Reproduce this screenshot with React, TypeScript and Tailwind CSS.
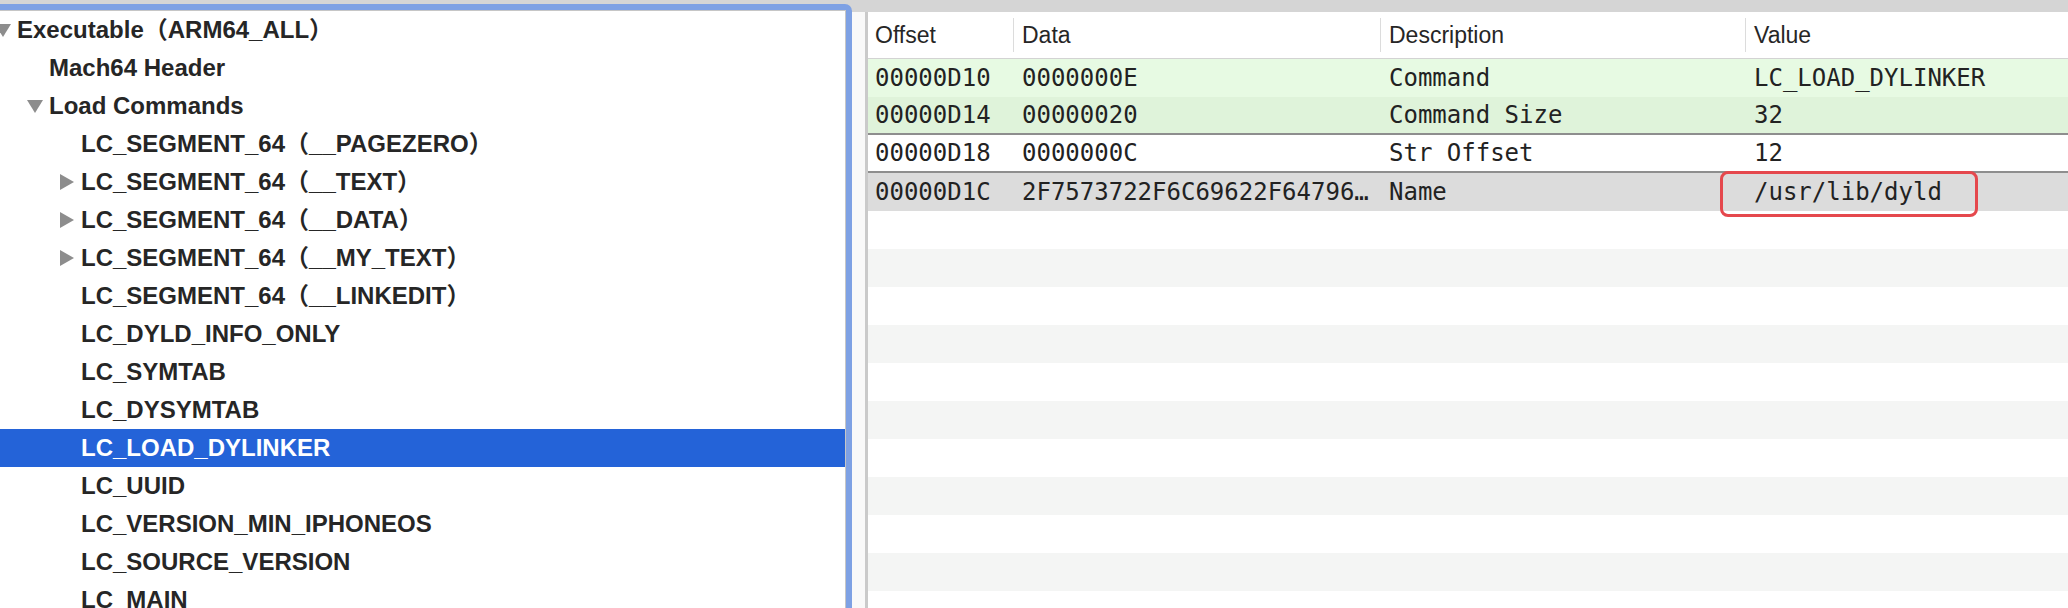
import React from "react";

type Toggle = "down" | "right" | undefined;

type TreeItem = {
  label: string;
  level: 0 | 1 | 2;
  toggle?: Toggle;
  selected?: boolean;
};

const tree: TreeItem[] = [
  { label: "Executable（ARM64_ALL）", level: 0, toggle: "down" },
  { label: "Mach64 Header", level: 1 },
  { label: "Load Commands", level: 1, toggle: "down" },
  { label: "LC_SEGMENT_64（__PAGEZERO）", level: 2 },
  { label: "LC_SEGMENT_64（__TEXT）", level: 2, toggle: "right" },
  { label: "LC_SEGMENT_64（__DATA）", level: 2, toggle: "right" },
  { label: "LC_SEGMENT_64（__MY_TEXT）", level: 2, toggle: "right" },
  { label: "LC_SEGMENT_64（__LINKEDIT）", level: 2 },
  { label: "LC_DYLD_INFO_ONLY", level: 2 },
  { label: "LC_SYMTAB", level: 2 },
  { label: "LC_DYSYMTAB", level: 2 },
  { label: "LC_LOAD_DYLINKER", level: 2, selected: true },
  { label: "LC_UUID", level: 2 },
  { label: "LC_VERSION_MIN_IPHONEOS", level: 2 },
  { label: "LC_SOURCE_VERSION", level: 2 },
  { label: "LC_MAIN", level: 2 },
];

const indent = {
  0: "-ml-[15px]",
  1: "pl-[17px]",
  2: "pl-[49px]",
};

const rows = [
  {
    offset: "00000D10",
    data: "0000000E",
    desc: "Command",
    value: "LC_LOAD_DYLINKER",
    className: "bg-[#e7fae3]",
  },
  {
    offset: "00000D14",
    data: "00000020",
    desc: "Command Size",
    value: "32",
    className: "bg-[#dff3da] border-b-2 border-[#8e8e8e]",
  },
  {
    offset: "00000D18",
    data: "0000000C",
    desc: "Str Offset",
    value: "12",
    className: "bg-white border-b-2 border-[#8e8e8e]",
  },
  {
    offset: "00000D1C",
    data: "2F7573722F6C69622F64796…",
    desc: "Name",
    value: "/usr/lib/dyld",
    className: "bg-[#dcdcdc]",
    marked: true,
  },
];

function Disclosure({ toggle }: { toggle: Toggle }) {
  return (
    <span className="flex h-full w-[32px] shrink-0 items-center justify-center pl-[3px]">
      {toggle === "down" && (
        <svg width="16" height="13" viewBox="0 0 16 13" aria-hidden>
          <polygon points="0,0 16,0 8,13" fill="#8d8d8d" />
        </svg>
      )}
      {toggle === "right" && (
        <svg width="14" height="16" viewBox="0 0 14 16" aria-hidden>
          <polygon points="0,0 14,8 0,16" fill="#8d8d8d" />
        </svg>
      )}
    </span>
  );
}

function HeaderCell({
  label,
  className,
  divider,
}: {
  label: string;
  className: string;
  divider?: boolean;
}) {
  return (
    <div className={`flex shrink-0 items-stretch ${className}`}>
      {divider && <span className="my-[6px] w-px bg-[#dcdcdc]" />}
      <span className={`flex items-center ${divider ? "pl-[8px]" : "pl-[7px]"}`}>
        {label}
      </span>
    </div>
  );
}

export default function App() {
  return (
    <div className="flex h-[608px] w-[2068px] overflow-hidden bg-[#d5d5d5]">
      {/* outline view with focus ring */}
      <div className="h-full w-[852px] shrink-0 pt-[4px]">
        <div className="h-full overflow-hidden rounded-tr-[7px] border-t-[6px] border-r-[6px] border-[#7ea1e4] bg-white">
          <div className="h-full overflow-hidden border-t border-r border-[#c6c6c6] font-['Liberation_Sans','Noto_Sans_CJK_SC',sans-serif] text-[24px] font-bold">
            {tree.map((item) => (
              <div
                key={item.label}
                className={`flex h-[38px] items-center ${
                  item.selected ? "bg-[#2463d8] text-white" : "text-[#262626]"
                }`}
              >
                <div className={`flex h-full items-center whitespace-nowrap ${indent[item.level]}`}>
                  <Disclosure toggle={item.toggle} />
                  <span>{item.label}</span>
                </div>
              </div>
            ))}
          </div>
        </div>
      </div>

      {/* detail table */}
      <div className="flex h-full flex-1 pt-[12px]">
        <div className="h-full w-[13px] shrink-0 bg-[#f9f9f9]" />
        <div className="h-full w-[3px] shrink-0 bg-[#cacaca]" />
        <div className="flex h-full flex-1 flex-col overflow-hidden bg-white">
          <div className="flex h-[47px] shrink-0 border-b border-[#d3d3d3] bg-white font-['Liberation_Sans',sans-serif] text-[23px] text-[#262626]">
            <HeaderCell label="Offset" className="w-[145px]" />
            <HeaderCell label="Data" className="w-[367px]" divider />
            <HeaderCell label="Description" className="w-[365px]" divider />
            <HeaderCell label="Value" className="flex-1" divider />
          </div>

          <div className="font-['DejaVu_Sans_Mono',monospace] text-[24px] text-[#222222]">
            {rows.map((r) => (
              <div key={r.offset} className={`flex h-[38px] items-center ${r.className}`}>
                <span className="w-[145px] shrink-0 pl-[7px]">{r.offset}</span>
                <span className="w-[367px] shrink-0 whitespace-nowrap pl-[9px]">{r.data}</span>
                <span className="w-[365px] shrink-0 whitespace-nowrap pl-[9px]">{r.desc}</span>
                <span className="relative flex h-full flex-1 items-center whitespace-nowrap pl-[9px]">
                  {r.value}
                  {r.marked && (
                    <span className="absolute top-[-2px] left-[-25px] h-[46px] w-[258px] rounded-[8px] border-[3px] border-[#e5484d]" />
                  )}
                </span>
              </div>
            ))}
            {Array.from({ length: 11 }).map((_, i) => (
              <div
                key={i}
                className={`h-[38px] ${i % 2 === 0 ? "bg-white" : "bg-[#f4f5f4]"}`}
              />
            ))}
          </div>
        </div>
      </div>
    </div>
  );
}
